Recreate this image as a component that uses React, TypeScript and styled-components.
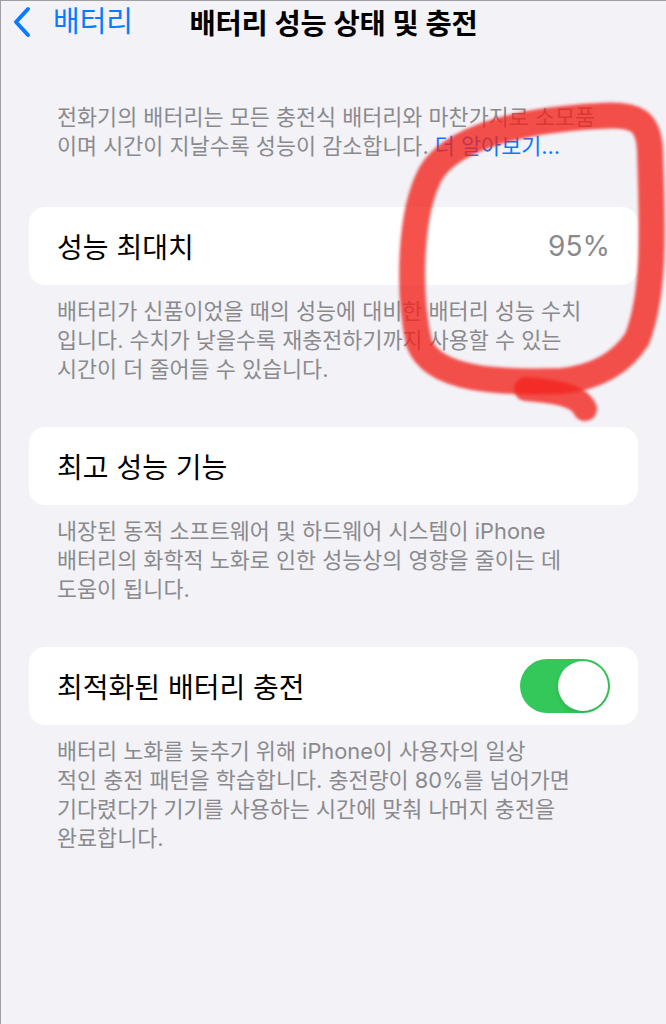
import React from "react";
import styled, { createGlobalStyle } from "styled-components";

const GlobalStyle = createGlobalStyle`
  html, body {
    margin: 0;
    padding: 0;
    background: #f2f2f7;
  }
  body {
    font-family: "Inter", "Noto Sans CJK KR", sans-serif;
    -webkit-font-smoothing: antialiased;
  }
`;

interface Section {
  label: string;
  value?: string;
  toggle?: boolean;
  lines: string[];
}

const sections: Section[] = [
  {
    label: "성능 최대치",
    value: "95%",
    lines: [
      "배터리가 신품이었을 때의 성능에 대비한 배터리 성능 수치",
      "입니다. 수치가 낮을수록 재충전하기까지 사용할 수 있는",
      "시간이 더 줄어들 수 있습니다."
    ]
  },
  {
    label: "최고 성능 기능",
    lines: [
      "내장된 동적 소프트웨어 및 하드웨어 시스템이 iPhone",
      "배터리의 화학적 노화로 인한 성능상의 영향을 줄이는 데",
      "도움이 됩니다."
    ]
  },
  {
    label: "최적화된 배터리 충전",
    toggle: true,
    lines: [
      "배터리 노화를 늦추기 위해 iPhone이 사용자의 일상",
      "적인 충전 패턴을 학습합니다. 충전량이 80%를 넘어가면",
      "기다렸다가 기기를 사용하는 시간에 맞춰 나머지 충전을",
      "완료합니다."
    ]
  }
];

const App: React.FC = () => {
  return (
    <Screen>
      <GlobalStyle />
      <NavBar>
        <BackButton>
          <svg width="18" height="32" viewBox="0 0 18 32">
            <path
              d="M15 3 L3 16 L15 29"
              fill="none"
              stroke="#0a7aff"
              strokeWidth="4"
              strokeLinecap="round"
              strokeLinejoin="round"
            />
          </svg>
          <BackLabel>배터리</BackLabel>
        </BackButton>
        <NavTitle>배터리 성능 상태 및 충전</NavTitle>
        <span />
      </NavBar>

      <Content>
        <Intro>
          전화기의 배터리는 모든 충전식 배터리와 마찬가지로 소모품
          <br />
          이며 시간이 지날수록 성능이 감소합니다. <Link>더 알아보기...</Link>
        </Intro>

        {sections.map((s) => (
          <Group key={s.label}>
            <Card>
              <CardLabel>{s.label}</CardLabel>
              {s.value && <CardValue>{s.value}</CardValue>}
              {s.toggle && (
                <Toggle>
                  <Knob />
                </Toggle>
              )}
            </Card>
            <Footer>
              {s.lines.map((l, i) => (
                <React.Fragment key={i}>
                  {l}
                  {i < s.lines.length - 1 && <br />}
                </React.Fragment>
              ))}
            </Footer>
          </Group>
        ))}
      </Content>

      <Scribble viewBox="0 0 666 1024" width="666" height="1024">
        <defs>
          <filter id="soft" x="-10%" y="-10%" width="120%" height="120%">
            <feGaussianBlur stdDeviation="1.4" />
          </filter>
        </defs>
        <g
          fill="none"
          stroke="rgb(242, 34, 28)"
          strokeOpacity="0.78"
          strokeLinecap="round"
          strokeLinejoin="round"
          filter="url(#soft)"
        >
          <path
            strokeWidth="26"
            d="M430 172 C452 136, 520 119, 598 115 C636 112, 648 120, 649 150 C651 220, 655 290, 636 338 C618 366, 590 377, 560 380 C500 382, 432 380, 418 342 C407 292, 408 212, 430 172"
          />
          <path strokeWidth="24" d="M525 388 C552 390, 578 394, 584 408" />
        </g>
      </Scribble>
    </Screen>
  );
};

const Screen = styled.div`
  position: relative;
  width: 666px;
  min-height: 1024px;
  box-sizing: border-box;
  background: #f2f2f7;
  border-top: 1px solid #a0a0a4;
  border-left: 1px solid #a0a0a4;
  overflow: hidden;
`;

const NavBar = styled.div`
  display: grid;
  grid-template-columns: 1fr auto 1fr;
  align-items: center;
  height: 37px;
`;

const BackButton = styled.div`
  display: flex;
  align-items: center;
  gap: 22px;
  padding-left: 12px;
`;

const BackLabel = styled.span`
  font-size: 29px;
  color: #0a7aff;
  line-height: 1;
`;

const NavTitle = styled.div`
  font-size: 28.5px;
  font-weight: 600;
  color: #000;
  letter-spacing: -0.2px;
`;

const Content = styled.div`
  padding: 0 28px;
`;

const Intro = styled.p`
  margin: 65px 0 46px;
  padding: 0 28px;
  font-size: 21.8px;
  line-height: 29px;
  color: #8a8a8e;
  white-space: nowrap;
`;

const Link = styled.span`
  color: #0a7aff;
`;

const Group = styled.section`
  margin-bottom: 43px;
`;

const Card = styled.div`
  display: flex;
  align-items: center;
  justify-content: space-between;
  height: 78px;
  padding: 0 28px;
  background: #fff;
  border-radius: 16px;
`;

const CardLabel = styled.span`
  font-size: 28px;
  color: #000;
`;

const CardValue = styled.span`
  font-size: 28px;
  color: #8a8a8e;
`;

const Toggle = styled.div`
  display: flex;
  align-items: center;
  justify-content: flex-end;
  width: 90px;
  height: 54px;
  padding: 2px;
  box-sizing: border-box;
  border-radius: 27px;
  background: #34c759;
`;

const Knob = styled.div`
  width: 50px;
  height: 50px;
  border-radius: 50%;
  background: #fff;
  box-shadow: 0 2px 4px rgba(0, 0, 0, 0.12);
`;

const Footer = styled.p`
  margin: 12px 0 0;
  padding: 0 28px;
  font-size: 21.8px;
  line-height: 29px;
  color: #8a8a8e;
  white-space: nowrap;
`;

const Scribble = styled.svg`
  position: absolute;
  top: 0;
  left: 0;
  pointer-events: none;
`;

export default App;
